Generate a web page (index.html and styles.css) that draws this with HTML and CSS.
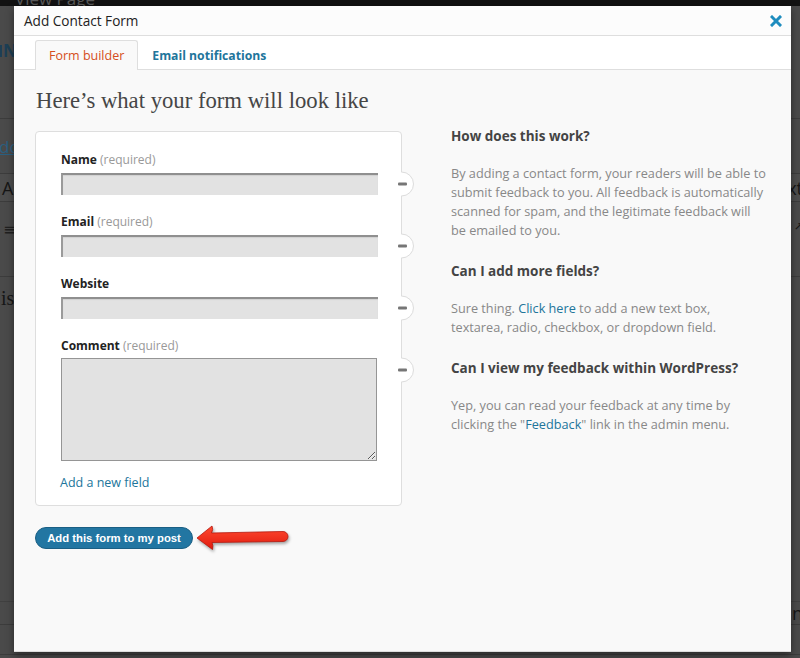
FILE: index.html
```html
<!DOCTYPE html>
<html lang="en">
<head>
<meta charset="utf-8">
<title>Add Contact Form</title>
<link rel="stylesheet" href="styles.css">
</head>
<body>
<div class="backdrop">
  <div class="adminbar"><span class="ab-text">View Page</span></div>
  <div class="bg-row r1"><span class="bg-left bg-n"><i class="bg-bar"></i>N</span></div>
  <div class="bg-row r2"><span class="bg-left bg-link">dd</span></div>
  <div class="bg-row r3"><span class="bg-left">Add</span><span class="bg-right">Text</span></div>
  <div class="bg-row r4"><span class="bg-left bg-list">&#8801;</span><span class="bg-right bg-small">&#8599;</span></div>
  <div class="bg-row r5"><span class="bg-left bg-serif">is</span></div>
  <div class="bg-row r6"><span class="bg-right">n</span></div>
  <div class="bg-row r7"></div>
</div>

<div class="modal">
  <header class="modal-header">
    <h1 class="modal-title">Add Contact Form</h1>
    <button class="close" type="button" aria-label="Close">
      <svg width="12" height="12" viewBox="0 0 12 12"><path d="M2 2 L10 10 M10 2 L2 10" stroke="#1e8cbe" stroke-width="3" stroke-linecap="square"/></svg>
    </button>
  </header>
  <nav class="tabs">
    <a class="tab active">Form builder</a>
    <a class="tab">Email notifications</a>
  </nav>
  <main class="content">
    <h2 class="preview-title">Here’s what your form will look like</h2>
    <div class="columns">
      <div class="left">
        <div class="card">
          <div class="field">
            <label class="label">Name <span class="req">(required)</span></label>
            <input class="input" type="text" readonly>
            <span class="remove"><svg width="18" height="26" viewBox="0 0 18 26"><rect x="2.5" y="1.5" width="2" height="23" fill="#fff"/><path d="M3.5 1 A12 12 0 0 1 3.5 25" fill="#fff" stroke="#dcdcdc"/><rect x="0" y="11.5" width="9" height="3" rx="1" fill="#767676"/></svg></span>
          </div>
          <div class="field">
            <label class="label">Email <span class="req">(required)</span></label>
            <input class="input" type="text" readonly>
            <span class="remove"><svg width="18" height="26" viewBox="0 0 18 26"><rect x="2.5" y="1.5" width="2" height="23" fill="#fff"/><path d="M3.5 1 A12 12 0 0 1 3.5 25" fill="#fff" stroke="#dcdcdc"/><rect x="0" y="11.5" width="9" height="3" rx="1" fill="#767676"/></svg></span>
          </div>
          <div class="field">
            <label class="label">Website</label>
            <input class="input" type="text" readonly>
            <span class="remove"><svg width="18" height="26" viewBox="0 0 18 26"><rect x="2.5" y="1.5" width="2" height="23" fill="#fff"/><path d="M3.5 1 A12 12 0 0 1 3.5 25" fill="#fff" stroke="#dcdcdc"/><rect x="0" y="11.5" width="9" height="3" rx="1" fill="#767676"/></svg></span>
          </div>
          <div class="field field-last">
            <label class="label label-tight">Comment <span class="req">(required)</span></label>
            <textarea class="textarea" readonly></textarea>
            <span class="remove"><svg width="18" height="26" viewBox="0 0 18 26"><rect x="2.5" y="1.5" width="2" height="23" fill="#fff"/><path d="M3.5 1 A12 12 0 0 1 3.5 25" fill="#fff" stroke="#dcdcdc"/><rect x="0" y="11.5" width="9" height="3" rx="1" fill="#767676"/></svg></span>
          </div>
          <a class="add-field">Add a new field</a>
        </div>
        <div class="actions">
          <button class="submit" type="button">Add this form to my post</button>
          <svg class="arrow" width="96" height="32" viewBox="0 0 96 32">
            <defs>
              <linearGradient id="ag" x1="0" y1="0" x2="0" y2="1">
                <stop offset="0" stop-color="#ff4a30"/>
                <stop offset="1" stop-color="#e01a0e"/>
              </linearGradient>
            </defs>
            <path d="M1 15 L16 3 Q17.5 6.5 15.5 10 L87 8.5 A5 5 0 0 1 87 18.5 L16 19.5 Q17.5 22.5 16.5 26.5 Z" fill="url(#ag)" stroke="#b4170c" stroke-width="0.8" stroke-linejoin="round"/>
          </svg>
        </div>
      </div>
      <aside class="help">
        <h3 class="help-title">How does this work?</h3>
        <p class="help-text">By adding a contact form, your readers will be able to submit feedback to you. All feedback is automatically scanned for spam, and the legitimate feedback will be emailed to you.</p>
        <h3 class="help-title">Can I add more fields?</h3>
        <p class="help-text">Sure thing. <a class="link">Click here</a> to add a new text box,<br>textarea, radio, checkbox, or dropdown field.</p>
        <h3 class="help-title">Can I view my feedback within WordPress?</h3>
        <p class="help-text">Yep, you can read your feedback at any time by clicking the "<a class="link">Feedback</a>" link in the admin menu.</p>
      </aside>
    </div>
  </main>
</div>
</body>
</html>
```

FILE: styles.css
```css
* { box-sizing: border-box; }

html, body {
  margin: 0;
  padding: 0;
  width: 800px;
  height: 658px;
  overflow: hidden;
}

body {
  background: #4a4a4a;
  font-family: "Open Sans", "DejaVu Sans", sans-serif;
  position: relative;
}

/* ---------- dimmed page behind the modal ---------- */
.backdrop {
  display: flex;
  flex-direction: column;
  height: 658px;
  color: #161616;
}

.adminbar {
  height: 6px;
  background: #121212;
  overflow: hidden;
  padding-left: 15px;
}

.ab-text {
  display: block;
  font-size: 17px;
  line-height: 10px;
  color: #5a5a5a;
  margin-top: -6px;
}

.bg-row {
  display: flex;
  justify-content: space-between;
  align-items: center;
  border-bottom: 1px solid #3c3c3c;
  font-size: 18px;
}

.r1 { height: 113px; align-items: flex-start; padding-top: 33px; }
.r2 { height: 55px; }
.r3 { height: 28px; background: #4d4d4d; }
.r4 { height: 75px; align-items: flex-start; padding-top: 16px; }
.r5 { height: 325px; align-items: flex-start; padding-top: 10px; border-bottom-color: #404040; }
.r6 { height: 23px; }
.r7 { height: 30px; }

.bg-left { padding-left: 2px; }
.bg-right { margin-left: auto; margin-right: -3px; }
.bg-n { display: flex; align-items: center; gap: 1px; font-weight: 700; color: #1d3f55; font-size: 17px; margin-left: -3px; }
.bg-bar { display: block; width: 3px; height: 12px; background: #1d3f55; }
.bg-link { color: #2a5f80; text-decoration: underline; font-size: 17px; margin-left: -3px; }
.bg-list { font-size: 16px; color: #202020; padding-left: 3px; }
.bg-small { font-size: 11px; color: #111; }
.bg-serif { font-family: "Liberation Serif", serif; font-size: 20px; padding-left: 1px; }

/* ---------- modal ---------- */
.modal {
  position: absolute;
  left: 14px;
  top: 6px;
  width: 777px;
  height: 646px;
  background: #f9f9f9;
  border-bottom: 1px solid #ddd;
  box-shadow: 0 3px 8px rgba(0, 0, 0, 0.45);
  display: flex;
  flex-direction: column;
}

.modal-header {
  height: 30px;
  background: #fcfcfc;
  border-bottom: 1px solid #dedede;
  display: flex;
  align-items: center;
  justify-content: space-between;
  padding: 0 8px 0 10px;
}

.modal-title {
  margin: 0;
  font-size: 13.6px;
  font-weight: 400;
  color: #222;
  line-height: 28px;
}

.close {
  border: 0;
  background: none;
  padding: 0;
  width: 14px;
  height: 14px;
  display: flex;
  align-items: center;
  justify-content: center;
}

.tabs {
  height: 34px;
  background: #fff;
  border-bottom: 1px solid #dedede;
  display: flex;
  align-items: flex-end;
  padding-left: 21px;
}

.tab {
  height: 30px;
  margin-bottom: -1px;
  padding: 0 13px;
  border: 1px solid transparent;
  border-bottom: 0;
  border-radius: 3px 3px 0 0;
  font-size: 12.2px;
  line-height: 30px;
  color: #21759b;
  font-weight: 700;
}

.tab.active {
  background: #f9f9f9;
  border-color: #dedede;
  color: #d54e21;
  font-weight: 400;
  font-size: 12.5px;
}

.content {
  padding: 18px 21px 0 21px;
}

.preview-title {
  margin: 0;
  font-family: "Liberation Serif", "DejaVu Serif", serif;
  font-weight: 400;
  font-size: 22.7px;
  line-height: 26px;
  color: #464646;
  padding-left: 1px;
}

.columns {
  display: flex;
  align-items: flex-start;
  gap: 49px;
  margin-top: 17px;
}

.left {
  width: 367px;
  flex: none;
}

.card {
  background: #fff;
  border: 1px solid #dedede;
  border-radius: 4px;
  padding: 19px 23px 13px 25px;
}

.field {
  position: relative;
  display: flex;
  flex-direction: column;
  margin-bottom: 18px;
}

.field-last { margin-bottom: 13px; }

.label {
  font-size: 12px;
  line-height: 18px;
  font-weight: 700;
  color: #222;
  margin-bottom: 4px;
}

.label-tight { margin-bottom: 3px; }

.req {
  font-weight: 400;
  color: #999;
}

.input {
  display: block;
  width: 317px;
  height: 22px;
  margin: 0;
  padding: 0;
  background: #e2e2e2;
  border: 0;
  border-top: 2px solid #8f8f8f;
  border-left: 2px solid #9a9a9a;
  border-radius: 0;
  box-shadow: inset 0 1px 1px rgba(0, 0, 0, 0.08);
  outline: none;
}

.textarea {
  display: block;
  width: 316px;
  height: 103px;
  margin: 0;
  padding: 0;
  background: #e2e2e2;
  border: 1px solid #959595;
  border-radius: 0;
  resize: both;
  outline: none;
}

.remove {
  position: absolute;
  left: calc(100% + 20px);
  top: 20px;
  display: block;
  width: 18px;
  height: 26px;
}

.remove svg { display: block; }

.add-field {
  display: block;
  font-size: 12.5px;
  line-height: 18px;
  color: #21759b;
  margin-left: -1px;
}

.actions {
  display: flex;
  align-items: flex-start;
  gap: 3px;
  margin-top: 21px;
}

.submit {
  width: 158px;
  height: 22px;
  border: 1px solid #1a5f84;
  border-radius: 11px;
  background: #2276a2;
  color: #fff;
  font-family: "Liberation Sans", Arial, sans-serif;
  font-weight: 700;
  font-size: 11.3px;
  line-height: 20px;
  padding: 0;
  text-align: center;
}

.arrow {
  display: block;
  margin-top: -4px;
  filter: drop-shadow(1px 2px 1.5px rgba(0, 0, 0, 0.35));
}

.help {
  width: 316px;
  margin-top: -4px;
}

.help-title {
  margin: 0;
  font-size: 13.5px;
  line-height: 19px;
  font-weight: 700;
  color: #444;
}

.help-text {
  margin: 18px 0 22px;
  font-size: 12.7px;
  line-height: 19px;
  color: #888;
}

.link {
  color: #21759b;
}
```
